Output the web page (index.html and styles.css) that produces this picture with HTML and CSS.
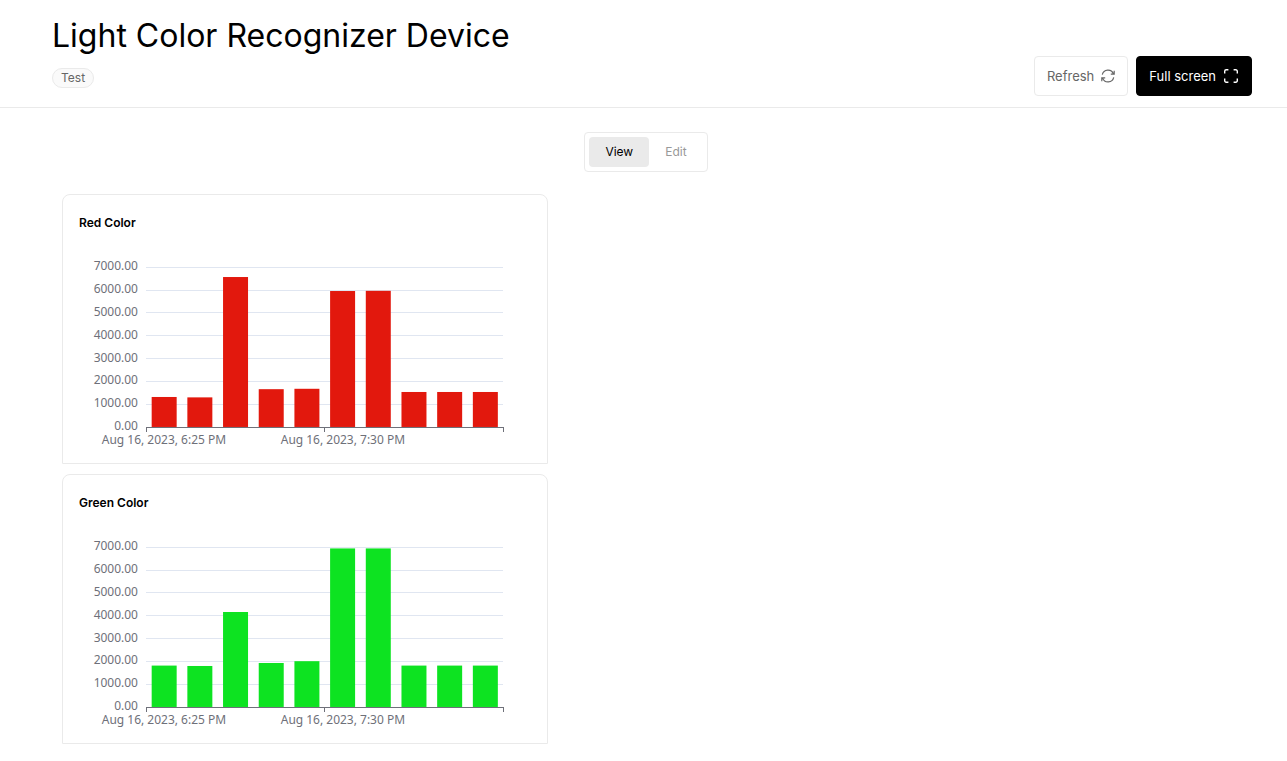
FILE: index.html
```html
<!DOCTYPE html>
<html lang="en">
<head>
<meta charset="utf-8">
<title>Light Color Recognizer Device</title>
<link rel="stylesheet" href="styles.css">
</head>
<body>
<header class="header">
  <div class="heading">
    <h1 class="title">Light Color Recognizer Device</h1>
    <span class="tag">Test</span>
  </div>
  <div class="actions">
    <button type="button" class="button">Refresh
      <svg class="icon" viewBox="0 0 14 14" aria-hidden="true">
        <path d="M1.3 5.6A5.8 5.8 0 0 1 12.4 4.9M13.2 1.8v3.4H9.8M12.7 8.4A5.8 5.8 0 0 1 1.6 9.1M.8 12.2V8.8h3.4"/>
      </svg>
    </button>
    <button type="button" class="button button-primary">Full screen
      <svg class="icon icon-corners" viewBox="0 0 16 16" aria-hidden="true">
        <path d="M1.7 5.4V3.2a1.5 1.5 0 0 1 1.5-1.5h2.2M10.6 1.7h2.2a1.5 1.5 0 0 1 1.5 1.5v2.2M14.3 10.6v2.2a1.5 1.5 0 0 1-1.5 1.5h-2.2M5.4 14.3H3.2a1.5 1.5 0 0 1-1.5-1.5v-2.2"/>
      </svg>
    </button>
  </div>
</header>
<main class="main">
  <div class="toggle" role="group" aria-label="Mode">
    <button type="button" class="mode mode-active" aria-pressed="true">View</button>
    <button type="button" class="mode" aria-pressed="false">Edit</button>
  </div>
  <div class="board">
    <section class="card">
      <h2 class="card-title">Red Color</h2>
      <svg class="chart" viewBox="0 0 452 200" role="img" aria-label="Red Color chart">
        <path class="grid" d="M67 20.5h357M67 43.5h357M67 65.5h357M67 88.5h357M67 111.5h357M67 134.5h357M67 157.5h357"/>
        <g class="bars-red">
          <rect x="72.7" y="150" width="25" height="30"/>
          <rect x="108.4" y="150.4" width="25" height="29.6"/>
          <rect x="144.1" y="30" width="25" height="150"/>
          <rect x="179.8" y="142.2" width="25" height="37.8"/>
          <rect x="215.5" y="141.8" width="25" height="38.2"/>
          <rect x="251.2" y="44" width="25" height="136"/>
          <rect x="286.9" y="43.8" width="25" height="136.2"/>
          <rect x="322.6" y="145" width="25" height="35"/>
          <rect x="358.3" y="145" width="25" height="35"/>
          <rect x="394" y="145" width="25" height="35"/>
        </g>
        <path class="axis" d="M67.5 185v-4.5h357v4.5M245.5 180.5v4.5"/>
        <g class="values">
          <text x="59" y="23">7000.00</text><text x="59" y="46">6000.00</text>
          <text x="59" y="69">5000.00</text><text x="59" y="92">4000.00</text>
          <text x="59" y="115">3000.00</text><text x="59" y="137">2000.00</text>
          <text x="59" y="160">1000.00</text><text x="59" y="183">0.00</text>
        </g>
        <g class="dates">
          <text x="85" y="197">Aug 16, 2023, 6:25 PM</text>
          <text x="264" y="197">Aug 16, 2023, 7:30 PM</text>
        </g>
      </svg>
    </section>
    <section class="card">
      <h2 class="card-title">Green Color</h2>
      <svg class="chart" viewBox="0 0 452 200" role="img" aria-label="Green Color chart">
        <path class="grid" d="M67 20.5h357M67 43.5h357M67 65.5h357M67 88.5h357M67 111.5h357M67 134.5h357M67 157.5h357"/>
        <g class="bars-green">
          <rect x="72.7" y="138.6" width="25" height="41.4"/>
          <rect x="108.4" y="139" width="25" height="41"/>
          <rect x="144.1" y="85" width="25" height="95"/>
          <rect x="179.8" y="136" width="25" height="44"/>
          <rect x="215.5" y="134.2" width="25" height="45.8"/>
          <rect x="251.2" y="21.4" width="25" height="158.6"/>
          <rect x="286.9" y="21.4" width="25" height="158.6"/>
          <rect x="322.6" y="138.6" width="25" height="41.4"/>
          <rect x="358.3" y="138.6" width="25" height="41.4"/>
          <rect x="394" y="138.6" width="25" height="41.4"/>
        </g>
        <path class="axis" d="M67.5 185v-4.5h357v4.5M245.5 180.5v4.5"/>
        <g class="values">
          <text x="59" y="23">7000.00</text><text x="59" y="46">6000.00</text>
          <text x="59" y="69">5000.00</text><text x="59" y="92">4000.00</text>
          <text x="59" y="115">3000.00</text><text x="59" y="137">2000.00</text>
          <text x="59" y="160">1000.00</text><text x="59" y="183">0.00</text>
        </g>
        <g class="dates">
          <text x="85" y="197">Aug 16, 2023, 6:25 PM</text>
          <text x="264" y="197">Aug 16, 2023, 7:30 PM</text>
        </g>
      </svg>
    </section>
  </div>
</main>
</body>
</html>
```
FILE: styles.css
```css
* { box-sizing: border-box; }

body {
  margin: 0;
  background: #fff;
  color: #000;
  font: 13px/20px Inter, "Liberation Sans", sans-serif;
}

.header {
  display: flex;
  justify-content: space-between;
  align-items: flex-end;
  padding: 16px 35px 11px 52px;
  border-bottom: 1px solid #eaeaea;
}

.heading {
  display: flex;
  flex-direction: column;
  align-items: flex-start;
  gap: 12px;
  padding-bottom: 8px;
}

.title {
  margin: 0;
  font-size: 32px;
  line-height: 40px;
  font-weight: 400;
}

.tag {
  padding: 0 8px;
  border: 1px solid #eaeaea;
  border-radius: 10px;
  background: #fafafa;
  color: #666;
  font-size: 12px;
  line-height: 18px;
}

.actions { display: flex; gap: 8px; }

.button {
  display: flex;
  align-items: center;
  gap: 7px;
  height: 40px;
  padding: 0 12px;
  border: 1px solid #eaeaea;
  border-radius: 4px;
  background: #fff;
  color: #666;
  font: inherit;
}

.button-primary {
  border-color: #000;
  background: #000;
  color: #fff;
}

.icon {
  width: 14px;
  height: 14px;
  fill: none;
  stroke: currentColor;
  stroke-width: 1.2;
}

.icon-corners {
  width: 16px;
  height: 16px;
  stroke-width: 1.4;
}

.main {
  display: flex;
  flex-direction: column;
  gap: 22px;
  padding: 24px 30px 16px 35px;
}

.toggle {
  display: flex;
  align-self: center;
  padding: 4px;
  border: 1px solid #eaeaea;
  border-radius: 4px;
}

.mode {
  height: 30px;
  padding: 0 16px;
  border: 0;
  border-radius: 4px;
  background: none;
  color: #999;
  font: inherit;
  font-size: 12px;
}

.mode-active { background: #eaeaea; color: #000; }

.board {
  display: grid;
  grid-template-columns: repeat(12, 1fr);
  gap: 10px;
  padding: 0 15px 0 27px;
}

.card {
  grid-column: 1 / span 5;
  padding: 16px;
  border: 1px solid #eaeaea;
  border-radius: 8px 8px 0 0;
}

.card-title {
  margin: 0 0 12px;
  font-size: 12px;
  line-height: 24px;
  font-weight: 600;
}

.chart {
  display: block;
  width: 100%;
  height: 200px;
  font: 12px "Noto Sans", "Open Sans", sans-serif;
}

.grid { stroke: #e0e6f1; shape-rendering: crispEdges; }
.axis { fill: none; stroke: #6e7079; shape-rendering: crispEdges; }
.bars-red { fill: #e2180d; }
.bars-green { fill: #0de321; }
.values { fill: #6e7079; text-anchor: end; }
.dates { fill: #6e7079; text-anchor: middle; }
```
